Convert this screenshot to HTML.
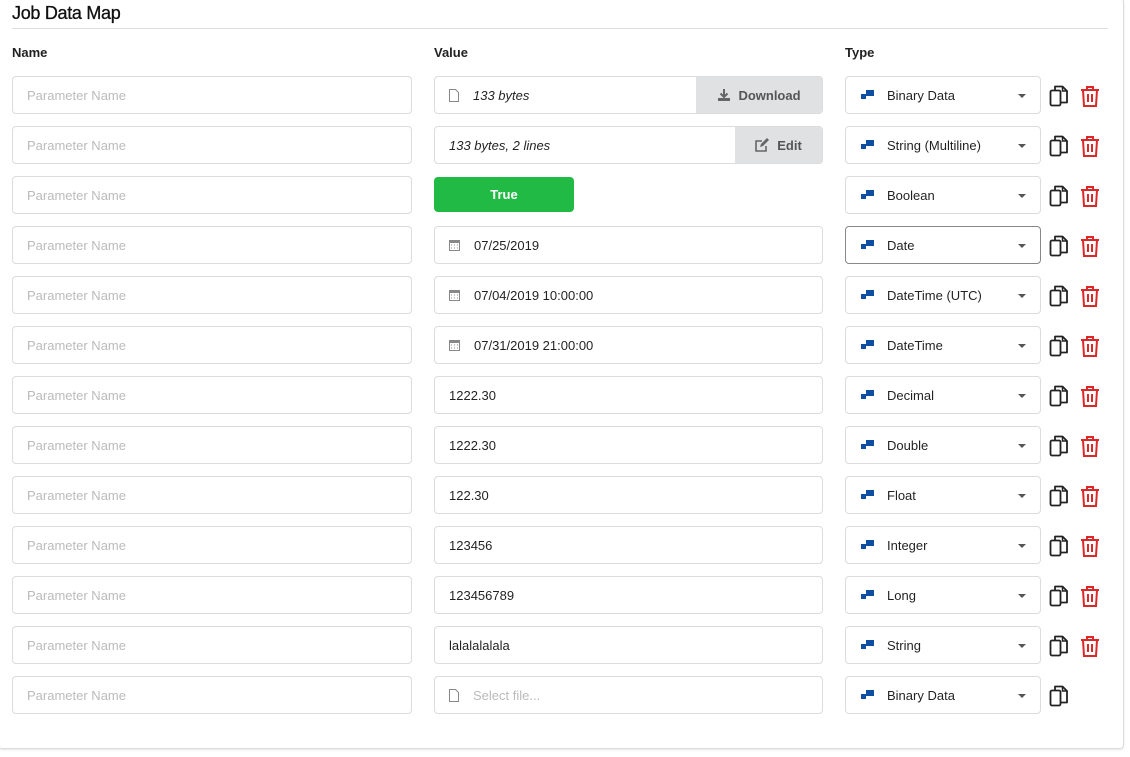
<!DOCTYPE html>
<html><head><meta charset="utf-8"><style>
*{box-sizing:border-box;margin:0;padding:0}
body{width:1130px;height:757px;background:#fff;font-family:"Liberation Sans",sans-serif;font-size:13px;color:rgba(0,0,0,.87);position:relative;overflow:hidden}
.panel{position:absolute;left:-2px;top:-2px;width:1126px;height:751px;border:1px solid #dcdcdc;border-radius:4px;box-shadow:0 1px 2px rgba(0,0,0,.1)}
h1{position:absolute;left:12px;top:3px;font-size:18px;font-weight:normal;color:#111;letter-spacing:-.3px;-webkit-text-stroke:.3px #111}
.hr{position:absolute;left:12px;top:28px;width:1096px;height:1px;background:#ddd}
.lbl{position:absolute;top:45px;font-weight:bold;font-size:13px;color:#222}
.in{position:absolute;height:38px;border:1px solid #dcdcdc;border-radius:4px;display:flex;align-items:center;padding-left:14px;background:#fff;overflow:hidden}
.ph{color:#bbb}
.btn{position:absolute;right:0;top:0;bottom:0;background:#e0e1e2;color:#555;font-weight:bold;font-style:normal;display:flex;align-items:center;justify-content:center}
.true{position:absolute;left:434px;width:140px;height:35px;background:#21ba45;color:#fff;font-weight:bold;border-radius:4px;display:flex;align-items:center;justify-content:center}
.sel{position:absolute;left:845px;width:196px;height:38px;border:1px solid #dcdcdc;border-radius:4px;display:flex;align-items:center;padding-left:41px}
.sel .ic{position:absolute;left:15px;top:13px;width:13px;height:9px}
.sel .ic:before{content:"";position:absolute;left:0;top:4px;width:5px;height:5px;background:#0d4ea3}
.sel .ic:after{content:"";position:absolute;left:5px;top:0;width:8px;height:6px;background:#0d4ea3}
.sel .ar{position:absolute;right:14px;top:17px;border-left:4px solid transparent;border-right:4px solid transparent;border-top:4px solid #555}
.cp,.tr{position:absolute}
.it{font-style:italic}
</style></head><body>
<div class="panel"></div>
<h1>Job Data Map</h1>
<div class="hr"></div>
<div class="lbl" style="left:12px">Name</div>
<div class="lbl" style="left:434px">Value</div>
<div class="lbl" style="left:845px">Type</div>

<svg width="0" height="0" style="position:absolute"><defs>
<symbol id="copy" viewBox="0 0 20 22"><path d="M6 5V1.5h7.5l4.5 4.5v11.5h-6" fill="none" stroke="#222" stroke-width="1.8" stroke-linejoin="round"/><path d="M13.5 1.5V6H18" fill="none" stroke="#222" stroke-width="1.5"/><rect x="1.5" y="5.5" width="10" height="15" rx="1.5" fill="none" stroke="#222" stroke-width="1.8"/></symbol>
<symbol id="trash" viewBox="0 0 20 22"><path d="M1 5h18M7 5V2h6v3M3 5l1 16h12l1-16M8 9v8M12 9v8" fill="none" stroke="#db2828" stroke-width="2"/></symbol>
<symbol id="file" viewBox="0 0 10 13"><path d="M.5.5h6l3 3v9H.5z" fill="none" stroke="#888" stroke-width="1"/></symbol>
<symbol id="cal" viewBox="0 0 11 12"><rect x=".5" y="1.5" width="10" height="10" fill="none" stroke="#888"/><rect x="0" y="1" width="11" height="3" fill="#888"/><path d="M2 6h1M5 6h1M8 6h1M2 9h1M5 9h1M8 9h1" stroke="#888"/></symbol>
<symbol id="dl" viewBox="0 0 14 14"><path d="M7 1v8M3.5 5.5L7 9l3.5-3.5" fill="none" stroke="#666" stroke-width="2"/><rect x="1" y="10" width="12" height="3" fill="#666"/></symbol>
<symbol id="ed" viewBox="0 0 15 14"><path d="M11 8v5H1V3h6" fill="none" stroke="#666" stroke-width="1.6"/><path d="M5 9l1-3 6-6 2 2-6 6z" fill="#666"/></symbol>
</defs></svg>

<div class="in ph" style="left:12px;top:76px;width:400px">Parameter Name</div>
<div class="in it" style="left:434px;top:76px;width:389px"><svg width="10" height="13" style="margin-right:14px"><use href="#file"/></svg>133 bytes<div class="btn" style="width:126px"><svg width="14" height="14" style="margin-right:7px"><use href="#dl"/></svg>Download</div></div>
<div class="sel" style="top:76px"><i class="ic"></i>Binary Data<i class="ar"></i></div>

<div class="in ph" style="left:12px;top:126px;width:400px">Parameter Name</div>
<div class="in it" style="left:434px;top:126px;width:389px">133 bytes, 2 lines<div class="btn" style="width:87px"><svg width="15" height="14" style="margin-right:7px"><use href="#ed"/></svg>Edit</div></div>
<div class="sel" style="top:126px"><i class="ic"></i>String (Multiline)<i class="ar"></i></div>

<div class="in ph" style="left:12px;top:176px;width:400px">Parameter Name</div>
<div class="true" style="top:177px">True</div>
<div class="sel" style="top:176px"><i class="ic"></i>Boolean<i class="ar"></i></div>

<div class="in ph" style="left:12px;top:226px;width:400px">Parameter Name</div>
<div class="in" style="left:434px;top:226px;width:389px"><svg width="11" height="12" style="margin-right:14px"><use href="#cal"/></svg>07/25/2019</div>
<div class="sel" style="top:226px;border-color:#888"><i class="ic"></i>Date<i class="ar"></i></div>

<div class="in ph" style="left:12px;top:276px;width:400px">Parameter Name</div>
<div class="in" style="left:434px;top:276px;width:389px"><svg width="11" height="12" style="margin-right:14px"><use href="#cal"/></svg>07/04/2019 10:00:00</div>
<div class="sel" style="top:276px"><i class="ic"></i>DateTime (UTC)<i class="ar"></i></div>

<div class="in ph" style="left:12px;top:326px;width:400px">Parameter Name</div>
<div class="in" style="left:434px;top:326px;width:389px"><svg width="11" height="12" style="margin-right:14px"><use href="#cal"/></svg>07/31/2019 21:00:00</div>
<div class="sel" style="top:326px"><i class="ic"></i>DateTime<i class="ar"></i></div>

<div class="in ph" style="left:12px;top:376px;width:400px">Parameter Name</div>
<div class="in" style="left:434px;top:376px;width:389px">1222.30</div>
<div class="sel" style="top:376px"><i class="ic"></i>Decimal<i class="ar"></i></div>

<div class="in ph" style="left:12px;top:426px;width:400px">Parameter Name</div>
<div class="in" style="left:434px;top:426px;width:389px">1222.30</div>
<div class="sel" style="top:426px"><i class="ic"></i>Double<i class="ar"></i></div>

<div class="in ph" style="left:12px;top:476px;width:400px">Parameter Name</div>
<div class="in" style="left:434px;top:476px;width:389px">122.30</div>
<div class="sel" style="top:476px"><i class="ic"></i>Float<i class="ar"></i></div>

<div class="in ph" style="left:12px;top:526px;width:400px">Parameter Name</div>
<div class="in" style="left:434px;top:526px;width:389px">123456</div>
<div class="sel" style="top:526px"><i class="ic"></i>Integer<i class="ar"></i></div>

<div class="in ph" style="left:12px;top:576px;width:400px">Parameter Name</div>
<div class="in" style="left:434px;top:576px;width:389px">123456789</div>
<div class="sel" style="top:576px"><i class="ic"></i>Long<i class="ar"></i></div>

<div class="in ph" style="left:12px;top:626px;width:400px">Parameter Name</div>
<div class="in" style="left:434px;top:626px;width:389px">lalalalalala</div>
<div class="sel" style="top:626px"><i class="ic"></i>String<i class="ar"></i></div>

<div class="in ph" style="left:12px;top:676px;width:400px">Parameter Name</div>
<div class="in ph" style="left:434px;top:676px;width:389px"><svg width="10" height="13" style="margin-right:14px"><use href="#file"/></svg>Select file...</div>
<div class="sel" style="top:676px"><i class="ic"></i>Binary Data<i class="ar"></i></div>

<svg class="cp" style="left:1049px;top:85px" width="20" height="22"><use href="#copy"/></svg><svg class="tr" style="left:1080px;top:85px" width="20" height="22"><use href="#trash"/></svg>
<svg class="cp" style="left:1049px;top:135px" width="20" height="22"><use href="#copy"/></svg><svg class="tr" style="left:1080px;top:135px" width="20" height="22"><use href="#trash"/></svg>
<svg class="cp" style="left:1049px;top:185px" width="20" height="22"><use href="#copy"/></svg><svg class="tr" style="left:1080px;top:185px" width="20" height="22"><use href="#trash"/></svg>
<svg class="cp" style="left:1049px;top:235px" width="20" height="22"><use href="#copy"/></svg><svg class="tr" style="left:1080px;top:235px" width="20" height="22"><use href="#trash"/></svg>
<svg class="cp" style="left:1049px;top:285px" width="20" height="22"><use href="#copy"/></svg><svg class="tr" style="left:1080px;top:285px" width="20" height="22"><use href="#trash"/></svg>
<svg class="cp" style="left:1049px;top:335px" width="20" height="22"><use href="#copy"/></svg><svg class="tr" style="left:1080px;top:335px" width="20" height="22"><use href="#trash"/></svg>
<svg class="cp" style="left:1049px;top:385px" width="20" height="22"><use href="#copy"/></svg><svg class="tr" style="left:1080px;top:385px" width="20" height="22"><use href="#trash"/></svg>
<svg class="cp" style="left:1049px;top:435px" width="20" height="22"><use href="#copy"/></svg><svg class="tr" style="left:1080px;top:435px" width="20" height="22"><use href="#trash"/></svg>
<svg class="cp" style="left:1049px;top:485px" width="20" height="22"><use href="#copy"/></svg><svg class="tr" style="left:1080px;top:485px" width="20" height="22"><use href="#trash"/></svg>
<svg class="cp" style="left:1049px;top:535px" width="20" height="22"><use href="#copy"/></svg><svg class="tr" style="left:1080px;top:535px" width="20" height="22"><use href="#trash"/></svg>
<svg class="cp" style="left:1049px;top:585px" width="20" height="22"><use href="#copy"/></svg><svg class="tr" style="left:1080px;top:585px" width="20" height="22"><use href="#trash"/></svg>
<svg class="cp" style="left:1049px;top:635px" width="20" height="22"><use href="#copy"/></svg><svg class="tr" style="left:1080px;top:635px" width="20" height="22"><use href="#trash"/></svg>
<svg class="cp" style="left:1049px;top:685px" width="20" height="22"><use href="#copy"/></svg>
</body></html>
